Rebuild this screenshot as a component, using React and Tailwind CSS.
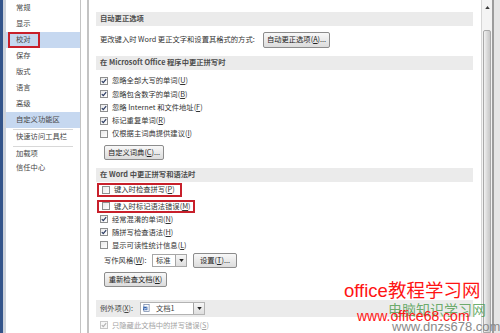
import React from 'react';

const navItems = [
  { label: '常规' },
  { label: '显示' },
  { label: '校对', active: true, marked: true },
  { label: '保存' },
  { label: '版式' },
  { label: '语言' },
  { label: '高级' },
  { label: '自定义功能区', active: true },
];

function Key({ k }) {
  return (
    <span>
      (<span className="underline">{k}</span>)
    </span>
  );
}

function Box({ checked, disabled }) {
  return (
    <span
      className={
        disabled
          ? 'w-[8px] h-[8px] border border-[#c6c6c6] bg-[#f7f7f7] flex items-center justify-center shrink-0'
          : 'w-[8px] h-[8px] border border-[#8e8f8f] bg-gradient-to-br from-[#e9e9e9] to-white flex items-center justify-center shrink-0'
      }
    >
      {checked && (
        <svg viewBox="0 0 6 6" className="w-[6px] h-[6px]">
          <path
            d="M0.8 3.1 L2.3 4.7 L5.2 1.1"
            stroke={disabled ? '#b4b4b4' : '#2b3b63'}
            strokeWidth="1.2"
            fill="none"
          />
        </svg>
      )}
    </span>
  );
}

function Check({ checked, label, k, disabled, h = 'h-[13px]' }) {
  return (
    <div className={`${h} shrink-0 flex items-center gap-[4px] pl-[4px]`}>
      <Box checked={checked} disabled={disabled} />
      <span className={disabled ? 'text-[#a3a3a3]' : 'text-[#333]'}>
        {label}
        <Key k={k} />
      </span>
    </div>
  );
}

function Btn({ children, className = '' }) {
  return (
    <div
      className={`h-[15px] border border-[#8c8c8c] rounded-[2px] bg-gradient-to-b from-[#f8f8f8] to-[#dcdcdc] flex items-center justify-center text-[#222] shrink-0 ${className}`}
    >
      {children}
    </div>
  );
}

function Band({ children, className = '' }) {
  return (
    <div className={`h-[14px] shrink-0 bg-[#ebebeb] flex items-center pl-[4px] text-[#4d4d4d] font-bold ${className}`}>
      {children}
    </div>
  );
}

function Arrow() {
  return (
    <div className="w-[11px] h-full border-l border-[#a5a5a5] bg-gradient-to-b from-[#f6f6f6] to-[#dedede] flex items-center justify-center">
      <svg viewBox="0 0 6 4" className="w-[5px] h-[3px]">
        <path d="M0 0 L6 0 L3 4 Z" fill="#222" />
      </svg>
    </div>
  );
}

export default function App() {
  return (
    <div className="w-[500px] h-[333px] overflow-hidden relative flex bg-white font-['Noto_Sans_CJK_SC','Noto_Sans',sans-serif] leading-none">
      {/* window edge */}
      <div className="w-[3px] bg-[#33548a]" />
      <div className="w-[3px] bg-[#cdd2da]" />

      {/* left navigation */}
      <div className="w-[75px] border-r border-[#c4c4c4] flex flex-col text-[7.3px] text-[#474747]">
        {navItems.map((item) => (
          <div
            key={item.label}
            className={`h-[16px] shrink-0 flex items-center pl-[10px] ${item.active ? 'bg-[#c6d8f0]' : ''}`}
          >
            {item.marked ? (
              <span className="border-2 border-[#c8202b] h-[16px] w-[32px] -ml-[8px] pl-[6px] flex items-center">
                {item.label}
              </span>
            ) : (
              item.label
            )}
          </div>
        ))}
        <div className="mx-[7px] mt-[1px] border-t border-[#d8d8d8]" />
        <div className="h-[13px] flex items-center pl-[10px]">快速访问工具栏</div>
        <div className="mx-[7px] mt-[3px] border-t border-[#d8d8d8]" />
        <div className="h-[14px] flex items-center pl-[10px]">加载项</div>
        <div className="h-[14px] flex items-center pl-[10px]">信任中心</div>
      </div>
      <div className="w-[6px] bg-white" />

      {/* main panel */}
      <div className="w-[394px] border-l-2 border-[#c3c3c3] pl-[7px] pr-[8px] pt-[12px] flex flex-col *:shrink-0 text-[7.3px] text-[#333]">
        <Band>自动更正选项</Band>
        <div className="mt-[6px] h-[16px] flex items-center gap-[5px] pl-[4px]">
          <span className="w-[158px] whitespace-nowrap">更改键入时 Word 更正文字和设置其格式的方式:</span>
          <Btn className="w-[67px] h-[16px]">
            自动更正选项<Key k="A" />...
          </Btn>
        </div>

        <Band className="mt-[8px]">在 Microsoft Office 程序中更正拼写时</Band>
        <div className="mt-[4.3px] flex flex-col">
          <Check h="h-[13.3px]" checked label="忽略全部大写的单词" k="U" />
          <Check h="h-[13.3px]" checked label="忽略包含数字的单词" k="B" />
          <Check h="h-[13.3px]" checked label="忽略 Internet 和文件地址" k="F" />
          <Check h="h-[13.3px]" checked label="标记重复单词" k="R" />
          <Check h="h-[13.3px]" label="仅根据主词典提供建议" k="I" />
        </div>
        <Btn className="mt-[4px] ml-[8px] w-[60px]">
          自定义词典<Key k="C" />...
        </Btn>

        <Band className="mt-[8px]">在 Word 中更正拼写和语法时</Band>
        <div className="mt-[1px] ml-[1px] w-[85px] h-[14px] border-2 border-[#c8202b] flex items-center">
          <div className="-ml-[1px]">
            <Check label="键入时检查拼写" k="P" />
          </div>
        </div>
        <div className="mt-[3px] ml-[1px] w-[98px] h-[13px] border-2 border-[#c8202b] flex items-center">
          <div className="-ml-[1px]">
            <Check label="键入时标记语法错误" k="M" />
          </div>
        </div>
        <Check checked label="经常混淆的单词" k="N" />
        <Check checked label="随拼写检查语法" k="H" />
        <Check label="显示可读性统计信息" k="L" />

        <div className="mt-[1.5px] h-[15px] flex items-center pl-[8px]">
          <span className="w-[48px] whitespace-nowrap">
            写作风格<Key k="W" />:
          </span>
          <div className="w-[35px] h-[13px] border border-[#a7a7a7] flex items-center bg-white">
            <span className="flex-1 pl-[3px]">标准</span>
            <Arrow />
          </div>
          <Btn className="ml-[6px] w-[44px]">
            设置<Key k="T" />...
          </Btn>
        </div>
        <Btn className="mt-[4px] ml-[8px] w-[63px]">
          重新检查文档<Key k="K" />
        </Btn>

        <div className="mt-[12.5px] h-[17px] bg-[#ebebeb] flex items-center pl-[4px] text-[#444]">
          <span className="w-[40px] whitespace-nowrap">
            例外项<Key k="X" />:
          </span>
          <div className="w-[65px] h-[13px] border border-[#b3b3b3] bg-white flex items-center">
            <svg viewBox="0 0 8 9" className="w-[7px] h-[8px] ml-[2px]">
              <rect x="1" y="0.5" width="6" height="8" fill="#fff" stroke="#6b7fa3" strokeWidth="0.8" />
              <rect x="0" y="3" width="5" height="4" fill="#2b5caa" />
              <path d="M0.8 3.8 L1.6 6.3 L2.5 4.5 L3.4 6.3 L4.2 3.8" stroke="#fff" strokeWidth="0.6" fill="none" />
            </svg>
            <span className="flex-1 pl-[6px]">文档1</span>
            <Arrow />
          </div>
        </div>
        <div className="mt-[2px] flex flex-col">
          <Check disabled checked label="只隐藏此文档中的拼写错误" k="S" />
          <Check disabled checked label="只隐藏此文档中的语法错误" k="D" />
        </div>
      </div>

      {/* scrollbar */}
      <div className="w-[11px] border-l border-[#d6d6d6] bg-[#f4f4f4] flex flex-col">
        <div className="h-[14px] flex items-center justify-center">
          <svg viewBox="0 0 6 4" className="w-[5px] h-[3px]">
            <path d="M0 4 L6 4 L3 0 Z" fill="#3a3a3a" />
          </svg>
        </div>
        <div className="mt-[16px] flex-1 mx-[1px] rounded-t-[2px] border border-[#a9a9a9] bg-gradient-to-r from-[#f2f2f2] via-[#dadada] to-[#c8c8c8]" />
      </div>
      <div className="w-[2px] bg-[#9c9c9c]" />
      <div className="w-[6px] bg-[#e6e6e6]" />

      {/* watermark */}
      <div className="absolute left-[388px] top-[302px] text-[14px] text-[#4a9a4a]/80 font-['Noto_Sans_CJK_SC',sans-serif] leading-none whitespace-nowrap">
        电脑知识学习网
      </div>
      <div className="absolute left-[392px] top-[320px] text-[13px] text-[#8a8a8a] font-['Liberation_Sans',sans-serif] leading-none whitespace-nowrap">
        www.dnzs678.com
      </div>
      <div className="absolute left-[344px] top-[282px] text-[18.5px] text-[#ff1414] font-['Liberation_Sans','Noto_Sans_CJK_SC',sans-serif] leading-none whitespace-nowrap">
        office教程学习网
      </div>
      <div className="absolute left-[357px] top-[309px] text-[14px] text-[#ff1414] font-['Liberation_Sans',sans-serif] leading-none whitespace-nowrap">
        www.office68.com
      </div>
    </div>
  );
}
